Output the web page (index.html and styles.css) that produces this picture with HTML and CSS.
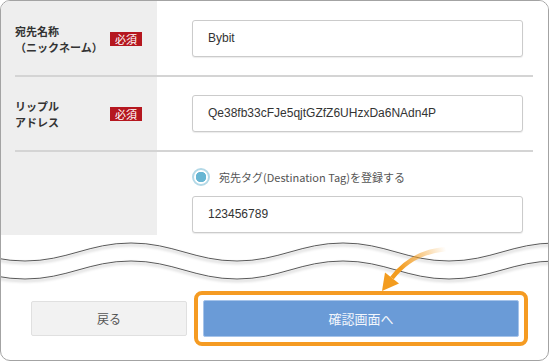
FILE: index.html
```html
<!DOCTYPE html>
<html lang="ja">
<head>
    <meta charset="UTF-8">
    <meta name="viewport" content="width=device-width, initial-scale=1.0">
    <title>宛先登録</title>
    <link rel="stylesheet" href="styles.css">
</head>
<body>
    <div class="card">
        <div class="fields">
            <div class="row">
                <div class="label">
                    <span>宛先名称<br>（ニックネーム）</span>
                    <span class="badge">必須</span>
                </div>
                <div class="field">
                    <div class="input">Bybit</div>
                </div>
            </div>
            <div class="row">
                <div class="label">
                    <span>リップル<br>アドレス</span>
                    <span class="badge">必須</span>
                </div>
                <div class="field">
                    <div class="input">Qe38fb33cFJe5qjtGZfZ6UHzxDa6NAdn4P</div>
                </div>
            </div>
            <div class="row last">
                <div class="label"></div>
                <div class="field tag">
                    <div class="radio">
                        <span class="dot"></span>
                        <span class="radio-text">宛先タグ(Destination Tag)を登録する</span>
                    </div>
                    <div class="input">123456789</div>
                </div>
            </div>
        </div>

        <svg class="wave" width="548" height="54" viewBox="0 0 548 54">
            <defs>
                <filter id="shade" x="-5%" y="-50%" width="110%" height="200%">
                    <feDropShadow dx="0" dy="2" stdDeviation="1.4" flood-color="#000" flood-opacity="0.35"/>
                </filter>
            </defs>
            <path d="M-82 8 C-40 8 -18 26 24 26 S88 8 130 8 S194 26 236 26 S300 8 342 8 S406 26 448 26 S512 8 554 8 L554 60 L-82 60 Z" fill="#fff"/>
            <g fill="none" stroke="#5a5a5a" stroke-width="1" filter="url(#shade)">
                <path d="M-82 8 C-40 8 -18 26 24 26 S88 8 130 8 S194 26 236 26 S300 8 342 8 S406 26 448 26 S512 8 554 8"/>
                <path d="M-82 26 C-40 26 -18 44 24 44 S88 26 130 26 S194 44 236 44 S300 26 342 26 S406 44 448 44 S512 26 554 26"/>
            </g>
        </svg>

        <div class="actions">
            <button type="button" class="back">戻る</button>
            <div class="highlight">
                <button type="button" class="confirm">確認画面へ</button>
            </div>
        </div>

        <!-- pointer arrow drawn over the wave -->
        <svg class="arrow" width="90" height="60" viewBox="370 240 90 60">
            <defs>
                <linearGradient id="tail" gradientUnits="userSpaceOnUse" x1="446" y1="249" x2="400" y2="268">
                    <stop offset="0" stop-color="#f39c1f" stop-opacity="0"/>
                    <stop offset="1" stop-color="#f39c1f" stop-opacity="1"/>
                </linearGradient>
            </defs>
            <path d="M446 249 Q412 252 392 278" fill="none" stroke="url(#tail)" stroke-width="4.5"/>
            <polygon points="382,291 385,272.5 399,283.5" fill="#f39c1f"/>
        </svg>
    </div>
</body>
</html>
```

FILE: styles.css
```css
* {
    box-sizing: border-box;
}

body {
    margin: 0;
    font-family: "Noto Sans CJK JP", "Noto Sans", sans-serif;
    color: #333;
    background-color: #fff;
}

.card {
    position: relative;
    width: 549px;
    height: 361px;
    border: 1px solid #a3a3a3;
    border-radius: 10px;
    overflow: hidden;
    background-color: #fff;
}

.fields {
    background: linear-gradient(to right, #eeeeee 156px, #fff 156px);
}

.row {
    display: grid;
    grid-template-columns: 142px 1fr;
    margin: 0 15px 0 14px;
    border-bottom: 2px solid #d4d4d4;
}

.row:first-child {
    padding-top: 1px;
}

.row.last {
    border-bottom: none;
}

.label {
    display: flex;
    align-items: center;
    justify-content: space-between;
    padding-right: 15px;
    font-size: 11px;
    font-weight: bold;
    line-height: 16px;
    color: #333;
}

.badge {
    width: 32px;
    height: 14px;
    background-color: #b5171f;
    color: #fff;
    font-size: 11px;
    font-weight: normal;
    line-height: 14px;
    text-align: center;
}

.field {
    padding: 18px 10px 18px 35px;
}

.field.tag {
    padding: 16px 10px 2px 35px;
}

.input {
    height: 37px;
    padding-left: 15px;
    border: 1px solid #cbcbcb;
    border-radius: 3px;
    box-shadow: 0 1px 1px rgba(0, 0, 0, 0.08);
    font-family: "Liberation Sans", Arial, sans-serif;
    font-size: 12px;
    line-height: 35px;
    color: #333;
    background-color: #fff;
}

.radio {
    display: flex;
    align-items: center;
    gap: 9px;
    height: 18px;
    margin-bottom: 10px;
}

.dot {
    width: 18px;
    height: 18px;
    border: 2px solid #b4d9e7;
    border-radius: 50%;
    background: radial-gradient(circle, #68b6d3 0 5px, #fff 5.5px);
}

.radio-text {
    font-size: 11px;
    color: #555;
}

.wave {
    display: block;
}

.actions {
    display: flex;
    align-items: center;
    gap: 7px;
    padding: 2px 0 13px 30px;
}

.back {
    width: 156px;
    height: 35px;
    border: 1px solid #e0e0e0;
    border-radius: 2px;
    background-color: #f2f2f2;
    font-family: inherit;
    font-size: 12px;
    color: #555;
}

.highlight {
    padding: 5px;
    border: 4px solid #f59b22;
    border-radius: 8px;
}

.confirm {
    display: block;
    width: 316px;
    height: 37px;
    border: 1px solid #a6c4ea;
    border-radius: 2px;
    background-color: #6a9bd7;
    font-family: inherit;
    font-size: 13px;
    color: #f2f6fc;
}

.arrow {
    position: absolute;
    left: 369px;
    top: 239px;
    pointer-events: none;
}
```
